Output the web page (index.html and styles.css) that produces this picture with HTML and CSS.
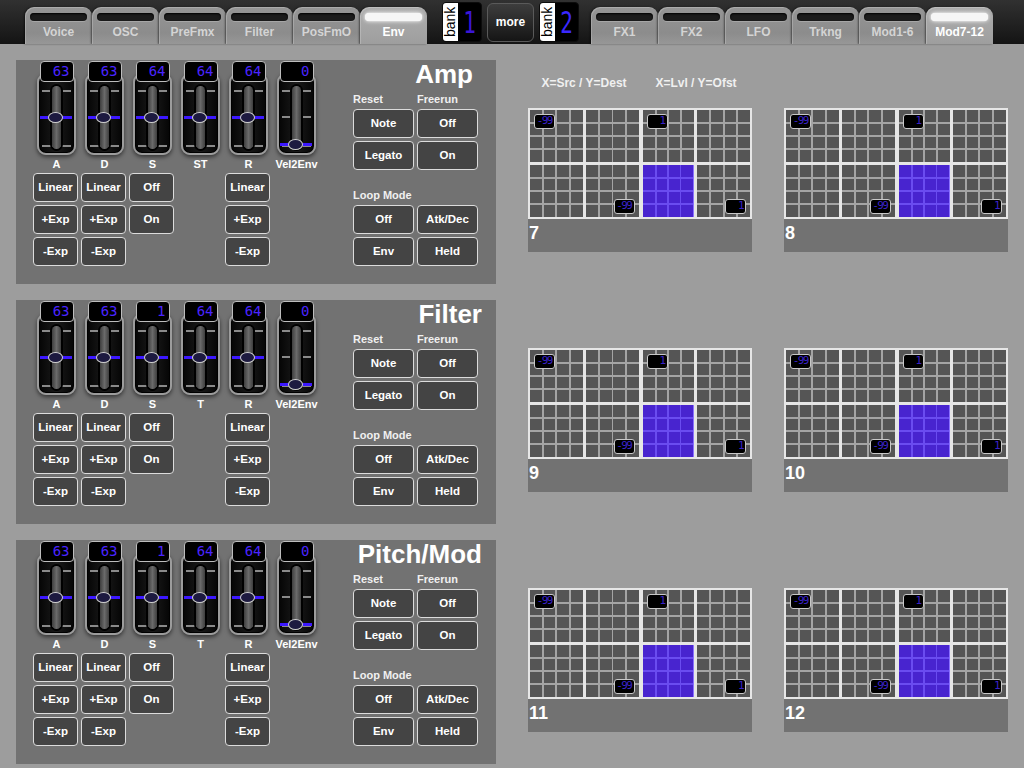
FILE: index.html
```html
<!DOCTYPE html>
<html>
<head>
<meta charset="utf-8">
<title>Env</title>
<link rel="stylesheet" href="styles.css">
</head>
<body>
<div class="topbar">
  <div class="tabs">
    <div class="tab"><i class="led"></i><span class="name">Voice</span></div>
    <div class="tab"><i class="led"></i><span class="name">OSC</span></div>
    <div class="tab"><i class="led"></i><span class="name">PreFmx</span></div>
    <div class="tab"><i class="led"></i><span class="name">Filter</span></div>
    <div class="tab"><i class="led"></i><span class="name">PosFmO</span></div>
    <div class="tab on"><i class="led"></i><span class="name">Env</span></div>
  </div>
  <div class="banks">
    <div class="bank"><span class="word">bank</span><span class="digit">1</span></div>
    <div class="more">more</div>
    <div class="bank"><span class="word">bank</span><span class="digit lit">2</span></div>
  </div>
  <div class="tabs">
    <div class="tab"><i class="led"></i><span class="name">FX1</span></div>
    <div class="tab"><i class="led"></i><span class="name">FX2</span></div>
    <div class="tab"><i class="led"></i><span class="name">LFO</span></div>
    <div class="tab"><i class="led"></i><span class="name">Trkng</span></div>
    <div class="tab"><i class="led"></i><span class="name">Mod1-6</span></div>
    <div class="tab on"><i class="led"></i><span class="name">Mod7-12</span></div>
  </div>
</div>

<div class="main">
  <div class="envs">

    <!-- amp envelope -->
    <div class="env">
      <div class="ctl">
        <div class="sliders">
          <div class="slider"><div class="lcd">63</div><div class="body"><i class="tick top"></i><i class="tick bot"></i><i class="track"></i><i class="line"></i><i class="knob"></i></div><div class="cap">A</div></div>
          <div class="slider"><div class="lcd">63</div><div class="body"><i class="tick top"></i><i class="tick bot"></i><i class="track"></i><i class="line"></i><i class="knob"></i></div><div class="cap">D</div></div>
          <div class="slider"><div class="lcd">64</div><div class="body"><i class="tick top"></i><i class="tick bot"></i><i class="track"></i><i class="line"></i><i class="knob"></i></div><div class="cap">S</div></div>
          <div class="slider"><div class="lcd">64</div><div class="body"><i class="tick top"></i><i class="tick bot"></i><i class="track"></i><i class="line"></i><i class="knob"></i></div><div class="cap">ST</div></div>
          <div class="slider"><div class="lcd">64</div><div class="body"><i class="tick top"></i><i class="tick bot"></i><i class="track"></i><i class="line"></i><i class="knob"></i></div><div class="cap">R</div></div>
          <div class="slider low"><div class="lcd">0</div><div class="body"><i class="tick top"></i><i class="tick mid"></i><i class="tick bot"></i><i class="track"></i><i class="line"></i><i class="knob"></i></div><div class="cap">Vel2Env</div></div>
        </div>
        <div class="curves">
          <div class="col"><div class="btn">Linear</div><div class="btn">+Exp</div><div class="btn">-Exp</div></div>
          <div class="col"><div class="btn">Linear</div><div class="btn">+Exp</div><div class="btn">-Exp</div></div>
          <div class="col"><div class="btn">Off</div><div class="btn">On</div></div>
          <div class="col"></div>
          <div class="col"><div class="btn">Linear</div><div class="btn">+Exp</div><div class="btn">-Exp</div></div>
        </div>
      </div>
      <div class="side">
        <div class="title short">Amp</div>
        <div class="pair"><span>Reset</span><span>Freerun</span></div>
        <div class="grid2"><div class="btn">Note</div><div class="btn">Off</div><div class="btn">Legato</div><div class="btn">On</div></div>
        <div class="lbl">Loop Mode</div>
        <div class="grid2"><div class="btn">Off</div><div class="btn">Atk/Dec</div><div class="btn">Env</div><div class="btn">Held</div></div>
      </div>
    </div>

    <!-- filter envelope -->
    <div class="env">
      <div class="ctl">
        <div class="sliders">
          <div class="slider"><div class="lcd">63</div><div class="body"><i class="tick top"></i><i class="tick bot"></i><i class="track"></i><i class="line"></i><i class="knob"></i></div><div class="cap">A</div></div>
          <div class="slider"><div class="lcd">63</div><div class="body"><i class="tick top"></i><i class="tick bot"></i><i class="track"></i><i class="line"></i><i class="knob"></i></div><div class="cap">D</div></div>
          <div class="slider"><div class="lcd">1</div><div class="body"><i class="tick top"></i><i class="tick bot"></i><i class="track"></i><i class="line"></i><i class="knob"></i></div><div class="cap">S</div></div>
          <div class="slider"><div class="lcd">64</div><div class="body"><i class="tick top"></i><i class="tick bot"></i><i class="track"></i><i class="line"></i><i class="knob"></i></div><div class="cap">T</div></div>
          <div class="slider"><div class="lcd">64</div><div class="body"><i class="tick top"></i><i class="tick bot"></i><i class="track"></i><i class="line"></i><i class="knob"></i></div><div class="cap">R</div></div>
          <div class="slider low"><div class="lcd">0</div><div class="body"><i class="tick top"></i><i class="tick mid"></i><i class="tick bot"></i><i class="track"></i><i class="line"></i><i class="knob"></i></div><div class="cap">Vel2Env</div></div>
        </div>
        <div class="curves">
          <div class="col"><div class="btn">Linear</div><div class="btn">+Exp</div><div class="btn">-Exp</div></div>
          <div class="col"><div class="btn">Linear</div><div class="btn">+Exp</div><div class="btn">-Exp</div></div>
          <div class="col"><div class="btn">Off</div><div class="btn">On</div></div>
          <div class="col"></div>
          <div class="col"><div class="btn">Linear</div><div class="btn">+Exp</div><div class="btn">-Exp</div></div>
        </div>
      </div>
      <div class="side">
        <div class="title">Filter</div>
        <div class="pair"><span>Reset</span><span>Freerun</span></div>
        <div class="grid2"><div class="btn">Note</div><div class="btn">Off</div><div class="btn">Legato</div><div class="btn">On</div></div>
        <div class="lbl">Loop Mode</div>
        <div class="grid2"><div class="btn">Off</div><div class="btn">Atk/Dec</div><div class="btn">Env</div><div class="btn">Held</div></div>
      </div>
    </div>

    <!-- pitch / mod envelope -->
    <div class="env">
      <div class="ctl">
        <div class="sliders">
          <div class="slider"><div class="lcd">63</div><div class="body"><i class="tick top"></i><i class="tick bot"></i><i class="track"></i><i class="line"></i><i class="knob"></i></div><div class="cap">A</div></div>
          <div class="slider"><div class="lcd">63</div><div class="body"><i class="tick top"></i><i class="tick bot"></i><i class="track"></i><i class="line"></i><i class="knob"></i></div><div class="cap">D</div></div>
          <div class="slider"><div class="lcd">1</div><div class="body"><i class="tick top"></i><i class="tick bot"></i><i class="track"></i><i class="line"></i><i class="knob"></i></div><div class="cap">S</div></div>
          <div class="slider"><div class="lcd">64</div><div class="body"><i class="tick top"></i><i class="tick bot"></i><i class="track"></i><i class="line"></i><i class="knob"></i></div><div class="cap">T</div></div>
          <div class="slider"><div class="lcd">64</div><div class="body"><i class="tick top"></i><i class="tick bot"></i><i class="track"></i><i class="line"></i><i class="knob"></i></div><div class="cap">R</div></div>
          <div class="slider low"><div class="lcd">0</div><div class="body"><i class="tick top"></i><i class="tick mid"></i><i class="tick bot"></i><i class="track"></i><i class="line"></i><i class="knob"></i></div><div class="cap">Vel2Env</div></div>
        </div>
        <div class="curves">
          <div class="col"><div class="btn">Linear</div><div class="btn">+Exp</div><div class="btn">-Exp</div></div>
          <div class="col"><div class="btn">Linear</div><div class="btn">+Exp</div><div class="btn">-Exp</div></div>
          <div class="col"><div class="btn">Off</div><div class="btn">On</div></div>
          <div class="col"></div>
          <div class="col"><div class="btn">Linear</div><div class="btn">+Exp</div><div class="btn">-Exp</div></div>
        </div>
      </div>
      <div class="side">
        <div class="title">Pitch/Mod</div>
        <div class="pair"><span>Reset</span><span>Freerun</span></div>
        <div class="grid2"><div class="btn">Note</div><div class="btn">Off</div><div class="btn">Legato</div><div class="btn">On</div></div>
        <div class="lbl">Loop Mode</div>
        <div class="grid2"><div class="btn">Off</div><div class="btn">Atk/Dec</div><div class="btn">Env</div><div class="btn">Held</div></div>
      </div>
    </div>

  </div>

  <div class="mods">
    <div class="legend"><span>X=Src / Y=Dest</span><span>X=Lvl / Y=Ofst</span></div>

    <div class="modrow">
      <div class="card">
        <div class="matrix">
          <div class="q"><span class="tag tl">-99</span></div><div class="q"></div><div class="q"><span class="tag tl">1</span></div><div class="q"></div>
          <div class="q"></div><div class="q"><span class="tag br">-99</span></div><div class="q fill"></div><div class="q"><span class="tag br">1</span></div>
        </div>
        <div class="num">7</div>
      </div>
      <div class="card">
        <div class="matrix">
          <div class="q"><span class="tag tl">-99</span></div><div class="q"></div><div class="q"><span class="tag tl">1</span></div><div class="q"></div>
          <div class="q"></div><div class="q"><span class="tag br">-99</span></div><div class="q fill"></div><div class="q"><span class="tag br">1</span></div>
        </div>
        <div class="num">8</div>
      </div>
    </div>

    <div class="modrow">
      <div class="card">
        <div class="matrix">
          <div class="q"><span class="tag tl">-99</span></div><div class="q"></div><div class="q"><span class="tag tl">1</span></div><div class="q"></div>
          <div class="q"></div><div class="q"><span class="tag br">-99</span></div><div class="q fill"></div><div class="q"><span class="tag br">1</span></div>
        </div>
        <div class="num">9</div>
      </div>
      <div class="card">
        <div class="matrix">
          <div class="q"><span class="tag tl">-99</span></div><div class="q"></div><div class="q"><span class="tag tl">1</span></div><div class="q"></div>
          <div class="q"></div><div class="q"><span class="tag br">-99</span></div><div class="q fill"></div><div class="q"><span class="tag br">1</span></div>
        </div>
        <div class="num">10</div>
      </div>
    </div>

    <div class="modrow">
      <div class="card">
        <div class="matrix">
          <div class="q"><span class="tag tl">-99</span></div><div class="q"></div><div class="q"><span class="tag tl">1</span></div><div class="q"></div>
          <div class="q"></div><div class="q"><span class="tag br">-99</span></div><div class="q fill"></div><div class="q"><span class="tag br">1</span></div>
        </div>
        <div class="num">11</div>
      </div>
      <div class="card">
        <div class="matrix">
          <div class="q"><span class="tag tl">-99</span></div><div class="q"></div><div class="q"><span class="tag tl">1</span></div><div class="q"></div>
          <div class="q"></div><div class="q"><span class="tag br">-99</span></div><div class="q fill"></div><div class="q"><span class="tag br">1</span></div>
        </div>
        <div class="num">12</div>
      </div>
    </div>
  </div>
</div>
</body>
</html>
```

FILE: styles.css
```css
* { box-sizing: border-box; }
body { margin: 0; width: 1024px; height: 768px; overflow: hidden;
       background: #9d9d9d; color: #fff;
       font-family: "Liberation Sans", Arial, sans-serif; font-weight: bold; }
i { display: block; }

/* top bar: page tabs + bank switch */
.topbar { height: 44px; display: flex; align-items: flex-end; padding-left: 25px;
          background: linear-gradient(#313131, #1d1d1d 70%, #141414); }
.tabs { display: flex; }
.tabs + .banks { margin-left: 15px; }
.banks + .tabs { margin-left: 12px; }
.tab { width: 67px; height: 37px; border-radius: 9px 9px 0 0; text-align: center;
       font-size: 12px; color: #d4d4d4;
       background: linear-gradient(#969696, #8c8c8c 70%, #979797);
       box-shadow: inset 1px 1px 0 rgba(255,255,255,.2), -1px 0 2px rgba(0,0,0,.5); }
.tab .led { height: 8px; margin: 6px 5px 0; border-radius: 4px; background: #1c1c1c;
            box-shadow: inset 0 1px 2px #000, 0 1px 0 rgba(255,255,255,.2); }
.tab .name { display: block; line-height: 14px; margin-top: 4px; }
.tab.on { background: linear-gradient(#adadad, #a3a3a3 70%, #9e9e9e); color: #fff; }
.tab.on .led { background: #f6f6f6; box-shadow: 0 0 4px #fff, 0 0 1px #fff; }

.banks { align-self: stretch; display: flex; align-items: center; gap: 5px; }
.bank { width: 40px; height: 40px; display: flex; border-radius: 4px; overflow: hidden;
        border: 1px solid #0c0c0c; background: #000; }
.bank .word { width: 15px; background: #fff; color: #000; font-weight: normal; font-size: 14px;
              writing-mode: vertical-rl; transform: rotate(180deg); text-align: center; line-height: 15px; }
.bank .digit { flex: 1; display: flex; align-items: center; justify-content: center;
               font: 30px "DejaVu Sans Mono", monospace; color: #3a16d6; transform: scaleX(.7); }
.bank .digit.lit { color: #3b28ff; }
.more { width: 47px; height: 39px; border-radius: 6px; border: 1px solid #5a5a5a;
        background: linear-gradient(#3d3d3d, #151515); font-size: 12px; line-height: 37px; text-align: center; }

/* page body */
.main { display: flex; gap: 32px; padding: 16px 16px 0; }
.envs { width: 480px; display: flex; flex-direction: column; gap: 16px; }
.env { height: 224px; background: #727272; display: flex; padding: 1px 18px 0 17px; }
.ctl { width: 320px; }
.side { width: 125px; margin-top: -1px; }

/* envelope sliders */
.sliders { display: flex; gap: 9px; padding-left: 4px; }
.slider { width: 39px; display: flex; flex-direction: column; align-items: center; }
.lcd { position: relative; z-index: 1; width: 34px; height: 21px; background: #000;
       border: 1.5px solid #bdbdbd; border-radius: 4px; text-align: right; padding-right: 3px;
       font: 14px/18px "DejaVu Sans Mono", monospace; color: #4a24ff; }
.body { position: relative; width: 39px; height: 82px; margin-top: -9px; border-radius: 9px;
        border: 2px solid #9c9c9c; background: linear-gradient(to right, #050505, #1a1a1a 50%, #050505);
        box-shadow: inset 0 0 0 1px #000, 0 2px 4px rgba(0,0,0,.55); }
.body .tick { position: absolute; left: 3px; width: 29px; height: 2px; background: #8a8a8a; }
.body .tick.top { top: 15px; }
.body .tick.mid { top: 41px; }
.body .tick.bot { top: 70px; }
.body .track { position: absolute; left: 13px; top: 11px; width: 9px; height: 63px; border-radius: 5px;
               background: linear-gradient(to right, #3e3e3e, #6a6a6a 50%, #3e3e3e); box-shadow: 0 0 0 2px #000; }
.body .line { position: absolute; left: 1px; top: 41px; width: 32px; height: 3px; background: #3c18ff; }
.body .knob { position: absolute; left: 9px; top: 37px; width: 15px; height: 11px; border-radius: 50%;
              border: 1.5px solid #cfcfcf; background: #1d1a40; }
.slider.low .line { top: 68px; }
.slider.low .knob { top: 64px; }
.cap { font-size: 11px; line-height: 14px; margin-top: 2px; white-space: nowrap; }

/* buttons */
.btn { height: 29px; background: #444; border: 1px solid #dcdcdc; border-radius: 4px;
       font-size: 11.5px; line-height: 27px; text-align: center; }
.curves { display: flex; gap: 3px; margin-top: 2px; }
.curves .col { width: 45px; display: flex; flex-direction: column; gap: 3px; }

.title { font-size: 26px; line-height: 28px; text-align: right; margin-right: -4px; white-space: nowrap; }
.title.short { margin-right: 5px; }
.pair { display: grid; grid-template-columns: 61px 61px; gap: 3px; margin-top: 4px;
        font-size: 11px; line-height: 14px; color: #f0f0f0; }
.lbl { font-size: 11px; line-height: 14px; color: #f0f0f0; margin-top: 18px; }
.grid2 { display: grid; grid-template-columns: 61px 61px; gap: 3px; margin-top: 3px; }

/* mod matrix */
.mods { padding-top: 16px; }
.legend { display: grid; grid-template-columns: 112px 112px; text-align: center;
          font-size: 12px; line-height: 14px; color: #f0f0f0; margin-bottom: 18px; }
.modrow { display: flex; gap: 32px; margin-bottom: 96px; }
.modrow:last-child { margin-bottom: 0; }
.card { width: 224px; height: 144px; background: #727272; }
.matrix { height: 111px; display: grid; grid-template-columns: repeat(4, 1fr); grid-template-rows: 1fr 1fr;
          gap: 3px; padding: 2px; background: #e6e6e6; }
.q { position: relative;
     background:
       linear-gradient(to right, transparent calc(25% - 1px), #a4a4a4 0 calc(25% + 1px), transparent 0 calc(50% - 1px), #a4a4a4 0 calc(50% + 1px), transparent 0 calc(75% - 1px), #a4a4a4 0 calc(75% + 1px), transparent 0),
       linear-gradient(to bottom, transparent calc(25% - 1px), #a4a4a4 0 calc(25% + 1px), transparent 0 calc(50% - 1px), #a4a4a4 0 calc(50% + 1px), transparent 0 calc(75% - 1px), #a4a4a4 0 calc(75% + 1px), transparent 0),
       #555; }
.q:nth-child(4n+3) { margin-left: 1px; }
.q.fill { border-right: 1px solid #8a70ff;
          background:
            linear-gradient(to right, transparent calc(25% - 1px), #6a4cf0 0 calc(25% + 1px), transparent 0 calc(50% - 1px), #6a4cf0 0 calc(50% + 1px), transparent 0 calc(75% - 1px), #6a4cf0 0 calc(75% + 1px), transparent 0),
            linear-gradient(to bottom, transparent calc(25% - 1px), #6a4cf0 0 calc(25% + 1px), transparent 0 calc(50% - 1px), #6a4cf0 0 calc(50% + 1px), transparent 0 calc(75% - 1px), #6a4cf0 0 calc(75% + 1px), transparent 0),
            #4824cf; }
.tag { position: absolute; width: 21px; height: 15px; background: #000; border: 1.5px solid #c8c8c8;
       border-radius: 3px; text-align: right; padding-right: 2px;
       font: 11px/12px "DejaVu Sans Mono", monospace; letter-spacing: -1.5px; color: #3a22c8; }
.tag.tl { left: 4px; top: 4px; }
.tag.br { right: 4px; bottom: 3px; }
.num { font-size: 18px; line-height: 20px; padding: 4px 0 0 1px; }
```
